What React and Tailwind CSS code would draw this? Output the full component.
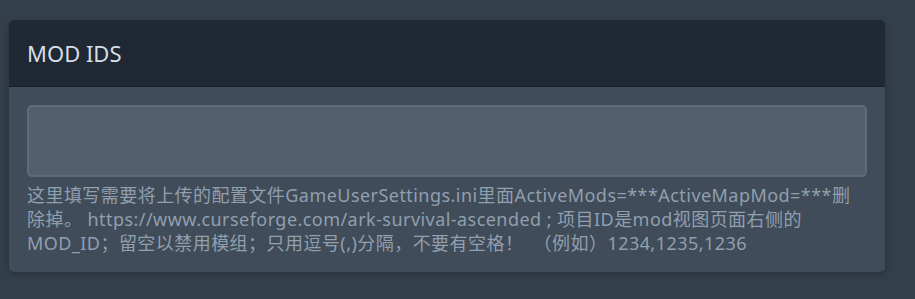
export default function App() {
  return (
    <div
      className="min-h-[299px] w-full bg-[#343f4c] px-[9px] pt-[20px] pb-[27px]"
      style={{ fontFamily: '"Noto Sans", "Noto Sans CJK SC", sans-serif' }}
    >
      <div className="w-[876px] overflow-hidden rounded-[5px] bg-[#404c59] shadow-[0_2px_6px_rgba(0,0,0,0.25)]">
        {/* HEADER */}
        <div className="flex h-[67px] items-center border-b border-[#181f27] bg-[#202833] px-[18px]">
          <h2 className="text-[22px] font-normal text-[#d6dee6]">MOD IDS</h2>
        </div>

        {/* BODY */}
        <div className="px-[18px] pt-[18px] pb-[17px]">
          <input
            type="text"
            className="block h-[72px] w-full rounded-[5px] border-2 border-[#5f6b78] bg-[#525f6c] px-3 text-[#d6dee6] outline-none"
          />
          <p className="mt-[6px] whitespace-nowrap text-[18px] leading-[24px] tracking-[0.45px] text-[#919fae]">
            这里填写需要将上传的配置文件GameUserSettings.ini里面ActiveMods=***ActiveMapMod=***删
            <br />
            除掉。 https://www.curseforge.com/ark-survival-ascended ; 项目ID是mod视图页面右侧的
            <br />
            MOD_ID；留空以禁用模组；只用逗号(,)分隔，不要有空格！&nbsp; （例如）1234,1235,1236
          </p>
        </div>
      </div>
    </div>
  );
}
